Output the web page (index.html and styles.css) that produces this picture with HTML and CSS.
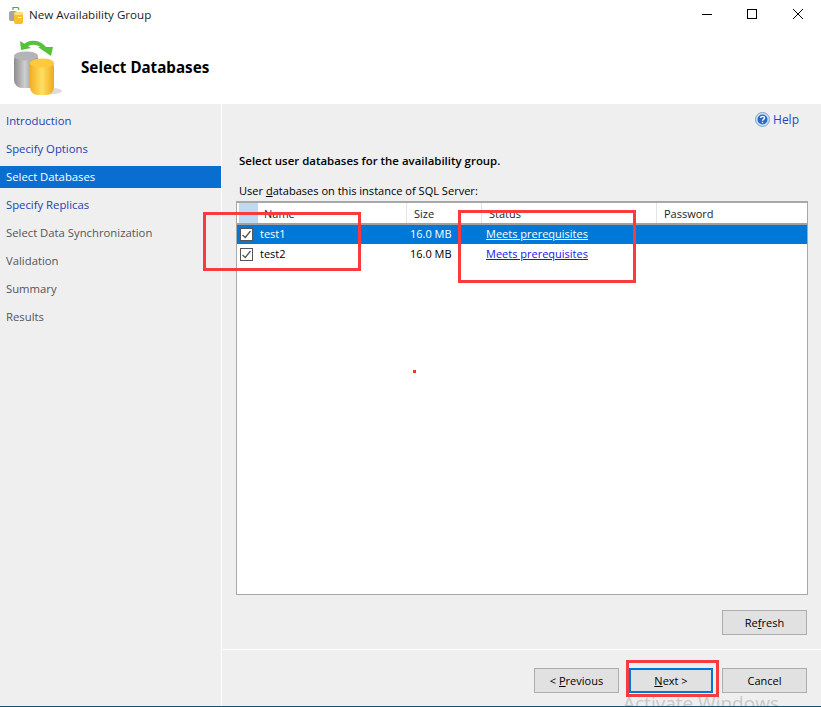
FILE: index.html
```html
<!DOCTYPE html>
<html lang="en">
<head>
<meta charset="utf-8">
<title>New Availability Group</title>
<link rel="stylesheet" href="styles.css">
</head>
<body>
<div class="window">
  <header class="top">
    <div class="titlebar">
      <svg class="app-icon" width="15" height="18" viewBox="0 0 15 18">
        <path d="M4 4 L4 1.500 L9 1.500 L10 4" fill="none" stroke="#4cb034" stroke-width="1.200"/>
        <rect x="0" y="5" width="8" height="10" rx="2" fill="#a4a4a4"/>
        <rect x="5" y="6" width="9" height="12" rx="2" fill="#f5c02c"/>
        <ellipse cx="9.500" cy="7.500" rx="4.500" ry="1.500" fill="#ffe08a"/>
        <rect x="9" y="11" width="3.500" height="1" fill="#fff6d0"/>
      </svg>
      <span class="title">New Availability Group</span>
      <div class="controls">
        <svg width="12" height="12" viewBox="0 0 12 12"><path d="M2 6.500H12" stroke="#000" fill="none"/></svg>
        <svg width="12" height="12" viewBox="0 0 12 12"><rect x="1.500" y="1.500" width="9" height="9" stroke="#000" fill="none"/></svg>
        <svg width="12" height="12" viewBox="0 0 12 12"><path d="M1 1L11 11M11 1L1 11" stroke="#000" fill="none"/></svg>
      </div>
    </div>
    <div class="banner">
      <svg class="banner-icon" width="50" height="58" viewBox="0 0 50 58">
        <defs>
          <linearGradient id="grey" x1="0" x2="1" y1="0" y2="0"><stop offset="0" stop-color="#8c8c8c"/><stop offset=".45" stop-color="#cfcfcf"/><stop offset="1" stop-color="#7c7c7c"/></linearGradient>
          <linearGradient id="gold" x1="0" x2="1" y1="0" y2="0"><stop offset="0" stop-color="#f3ae22"/><stop offset=".5" stop-color="#ffdf62"/><stop offset="1" stop-color="#f0a81c"/></linearGradient>
        </defs>
        <ellipse cx="34" cy="53" rx="15" ry="3.500" fill="#dcdcdc"/>
        <rect x="1" y="14" width="24" height="36" rx="8" fill="url(#grey)"/>
        <ellipse cx="13" cy="18" rx="12" ry="4.500" fill="#b4b4b4"/>
        <path d="M11 9 C16 3 26 3 32 11" fill="none" stroke="#56c23c" stroke-width="4"/>
        <path d="M7 3 L8 12 L18 10 Z" fill="#56c23c"/>
        <path d="M25 9 L40 9 L38 18 Z" fill="#56c23c"/>
        <rect x="17" y="21" width="24" height="36" rx="8" fill="url(#gold)"/>
        <ellipse cx="29" cy="25" rx="12" ry="4.500" fill="#ffc93e"/>
      </svg>
      <h1 class="heading">Select Databases</h1>
    </div>
  </header>
  <div class="body">
    <nav class="nav">
      <a class="nav-item link">Introduction</a>
      <a class="nav-item link">Specify Options</a>
      <a class="nav-item current">Select Databases</a>
      <a class="nav-item link">Specify Replicas</a>
      <a class="nav-item">Select Data Synchronization</a>
      <a class="nav-item">Validation</a>
      <a class="nav-item">Summary</a>
      <a class="nav-item">Results</a>
    </nav>
    <main class="pane">
      <div class="content">
        <div class="help-row">
          <svg width="15" height="15" viewBox="0 0 15 15">
            <circle cx="7.500" cy="7.500" r="7" fill="#cfe0f2" stroke="#7fa3c9"/>
            <circle cx="7.500" cy="7.500" r="5" fill="#2a68c4"/>
            <path d="M5.600 6 C5.700 3.800 9.500 3.800 9.500 6 C9.500 7.400 7.500 7.300 7.500 8.800" fill="none" stroke="#fff" stroke-width="1.400"/>
            <rect x="6.800" y="9.800" width="1.400" height="1.400" fill="#fff"/>
          </svg>
          <a class="help">Help</a>
        </div>
        <h2 class="section-title">Select user databases for the availability group.</h2>
        <p class="list-label">User <u>d</u>atabases on this instance of SQL Server:</p>
        <div class="grid">
          <div class="row head">
            <div class="col-name head-name"><span class="corner"></span><span class="name-text">Name</span></div>
            <div class="col-size cell-head">Size</div>
            <div class="col-status cell-head">Status</div>
            <div class="col-pass cell-head">Password</div>
          </div>
          <div class="row data selected">
            <div class="col-name"><span class="check"><svg width="13" height="13" viewBox="0 0 13 13"><path d="M2.500 7L5.300 9.500L10.500 3" fill="none" stroke="#555" stroke-width="1.300"/></svg></span>test1</div>
            <div class="col-size">16.0 MB</div>
            <div class="col-status"><a class="status-link">Meets prerequisites</a></div>
            <div class="col-pass"></div>
          </div>
          <div class="row data">
            <div class="col-name"><span class="check"><svg width="13" height="13" viewBox="0 0 13 13"><path d="M2.500 7L5.300 9.500L10.500 3" fill="none" stroke="#555" stroke-width="1.300"/></svg></span>test2</div>
            <div class="col-size">16.0 MB</div>
            <div class="col-status"><a class="status-link">Meets prerequisites</a></div>
            <div class="col-pass"></div>
          </div>
        </div>
        <div class="refresh-row"><button class="btn">Re<u>f</u>resh</button></div>
      </div>
      <footer class="footer">
        <button class="btn">&lt; <u>P</u>revious</button>
        <button class="btn primary"><u>N</u>ext &gt;</button>
        <button class="btn">Cancel</button>
      </footer>
    </main>
  </div>
  <div class="taskbar-line"></div>
</div>
<div class="mark mark-names"></div>
<div class="mark mark-status"></div>
<div class="mark mark-next"></div>
<div class="mark-dot"></div>
<div class="watermark">Activate Windows</div>
</body>
</html>
```
FILE: styles.css
```css
* { box-sizing: border-box; }
html, body { margin: 0; padding: 0; height: 100%; overflow: hidden; }
body { font-family: "Open Sans", "Noto Sans", sans-serif; font-size: 11px; color: #000; background: #fff; }
.window { width: 821px; height: 707px; display: flex; flex-direction: column; position: relative; }
.top { height: 104px; background: #fff; flex: none; }
.titlebar { height: 29px; display: flex; align-items: center; padding-left: 9px; }
.app-icon { margin-right: 5px; }
.title { color: #1a1a2a; font-size: 11.6px; }
.controls { margin-left: auto; display: flex; gap: 34px; padding: 0 17px 1px 0; align-items: center; }
.banner { display: flex; align-items: center; padding-left: 13px; height: 73px; margin-top: 1px; }
.banner-icon { margin-right: 18px; }
.heading { margin: 0; font-size: 15.2px; font-weight: 700; font-family: "Noto Sans", sans-serif; }
.body { flex: 1; display: flex; min-height: 0; background: #efefef; }
.nav { width: 222px; flex: none; border-right: 1px solid #fff; padding-top: 3px; display: flex; flex-direction: column; margin-right: 1px; font-size: 11.3px; }
.nav-item { height: 28px; line-height: 28px; padding-left: 6px; color: #555; flex: none; }
.nav-item.link { color: #1a3fb0; }
.nav-item.current { height: 22px; line-height: 22px; margin: 3px 0; background: #0a6ed1; color: #fff; }
.pane { flex: 1; display: flex; flex-direction: column; min-width: 0; }
.content { flex: 1; padding: 0 13px; display: flex; flex-direction: column; border-bottom: 1px solid #fff; }
.help-row { display: flex; justify-content: flex-end; align-items: center; gap: 3px; padding: 5px 9px 0 0; height: 25px; }
.help { color: #2a3fd0; font-size: 12px; }
.section-title { margin: 24px 0 0 3px; font-size: 11.45px; font-weight: 600; line-height: 16px; }
.list-label { margin: 14px 0 0 3px; line-height: 16px; font-size: 11.05px; }
.grid { height: 394px; margin-top: 2px; border: 1px solid #a8a8a8; border-top-width: 2px; background: #fff; flex: none; }
.row { display: flex; align-items: stretch; }
.head { height: 22px; border-bottom: 2px solid #a0a0a0; color: #222; }
.data { height: 20px; align-items: center; }
.data > div { display: flex; align-items: center; height: 100%; padding-bottom: 2px; }
.selected { height: 19px; background: #0078d7; color: #fff; }
.col-name { width: 170px; flex: none; }
.col-size { width: 75px; flex: none; padding-left: 3px; }
.col-status { width: 175px; flex: none; padding-left: 4px; }
.col-pass { flex: 1; padding-left: 7px; }
.cell-head { padding-left: 7px; }
.head-name { display: flex; align-items: center; border-right: 1px solid #e4e4e4; }
.cell-head { border-right: 1px solid #e4e4e4; display: flex; align-items: center; }
.col-pass.cell-head { border-right: 0; }
.corner { width: 19px; height: 20px; margin-left: 2px; background: #bcdaf2; }
.name-text { margin-left: 6px; }
.check { width: 13px; height: 13px; margin: 2px 7px 0 3px; border: 1px solid #555; background: #fff; display: inline-flex; flex: none; }
.check svg { margin: -1px; }
.status-link { color: #1414ee; text-decoration: underline; }
.selected .status-link { color: #fff; }
.refresh-row { display: flex; justify-content: flex-end; margin-top: 15px; padding-right: 1px; }
.btn { width: 85px; height: 25px; background: #e1e1e1; border: 1px solid #adadad; font: inherit; color: #000; padding: 0; }
.primary { border: 2px solid #0078d7; width: 84px; margin: 0 9px 0 10px; }
.footer { height: 56px; flex: none; display: flex; align-items: flex-start; justify-content: flex-end; padding: 18px 14px 0 0; }
.taskbar-line { height: 1px; background: #15506f; flex: none; }
.mark { position: absolute; border: 3px solid #fb3a3e; pointer-events: none; }
.mark-names { left: 203px; top: 212px; width: 158px; height: 59px; }
.mark-status { left: 458px; top: 210px; width: 178px; height: 73px; }
.mark-next { left: 626px; top: 660px; width: 93px; height: 37px; }
.mark-dot { position: absolute; left: 413px; top: 370px; width: 3px; height: 3px; background: #e33; }
.watermark { position: absolute; left: 623px; top: 695px; font-size: 19px; color: #c9c9c9; line-height: 16px; height: 11px; overflow: hidden; white-space: nowrap; }
```
